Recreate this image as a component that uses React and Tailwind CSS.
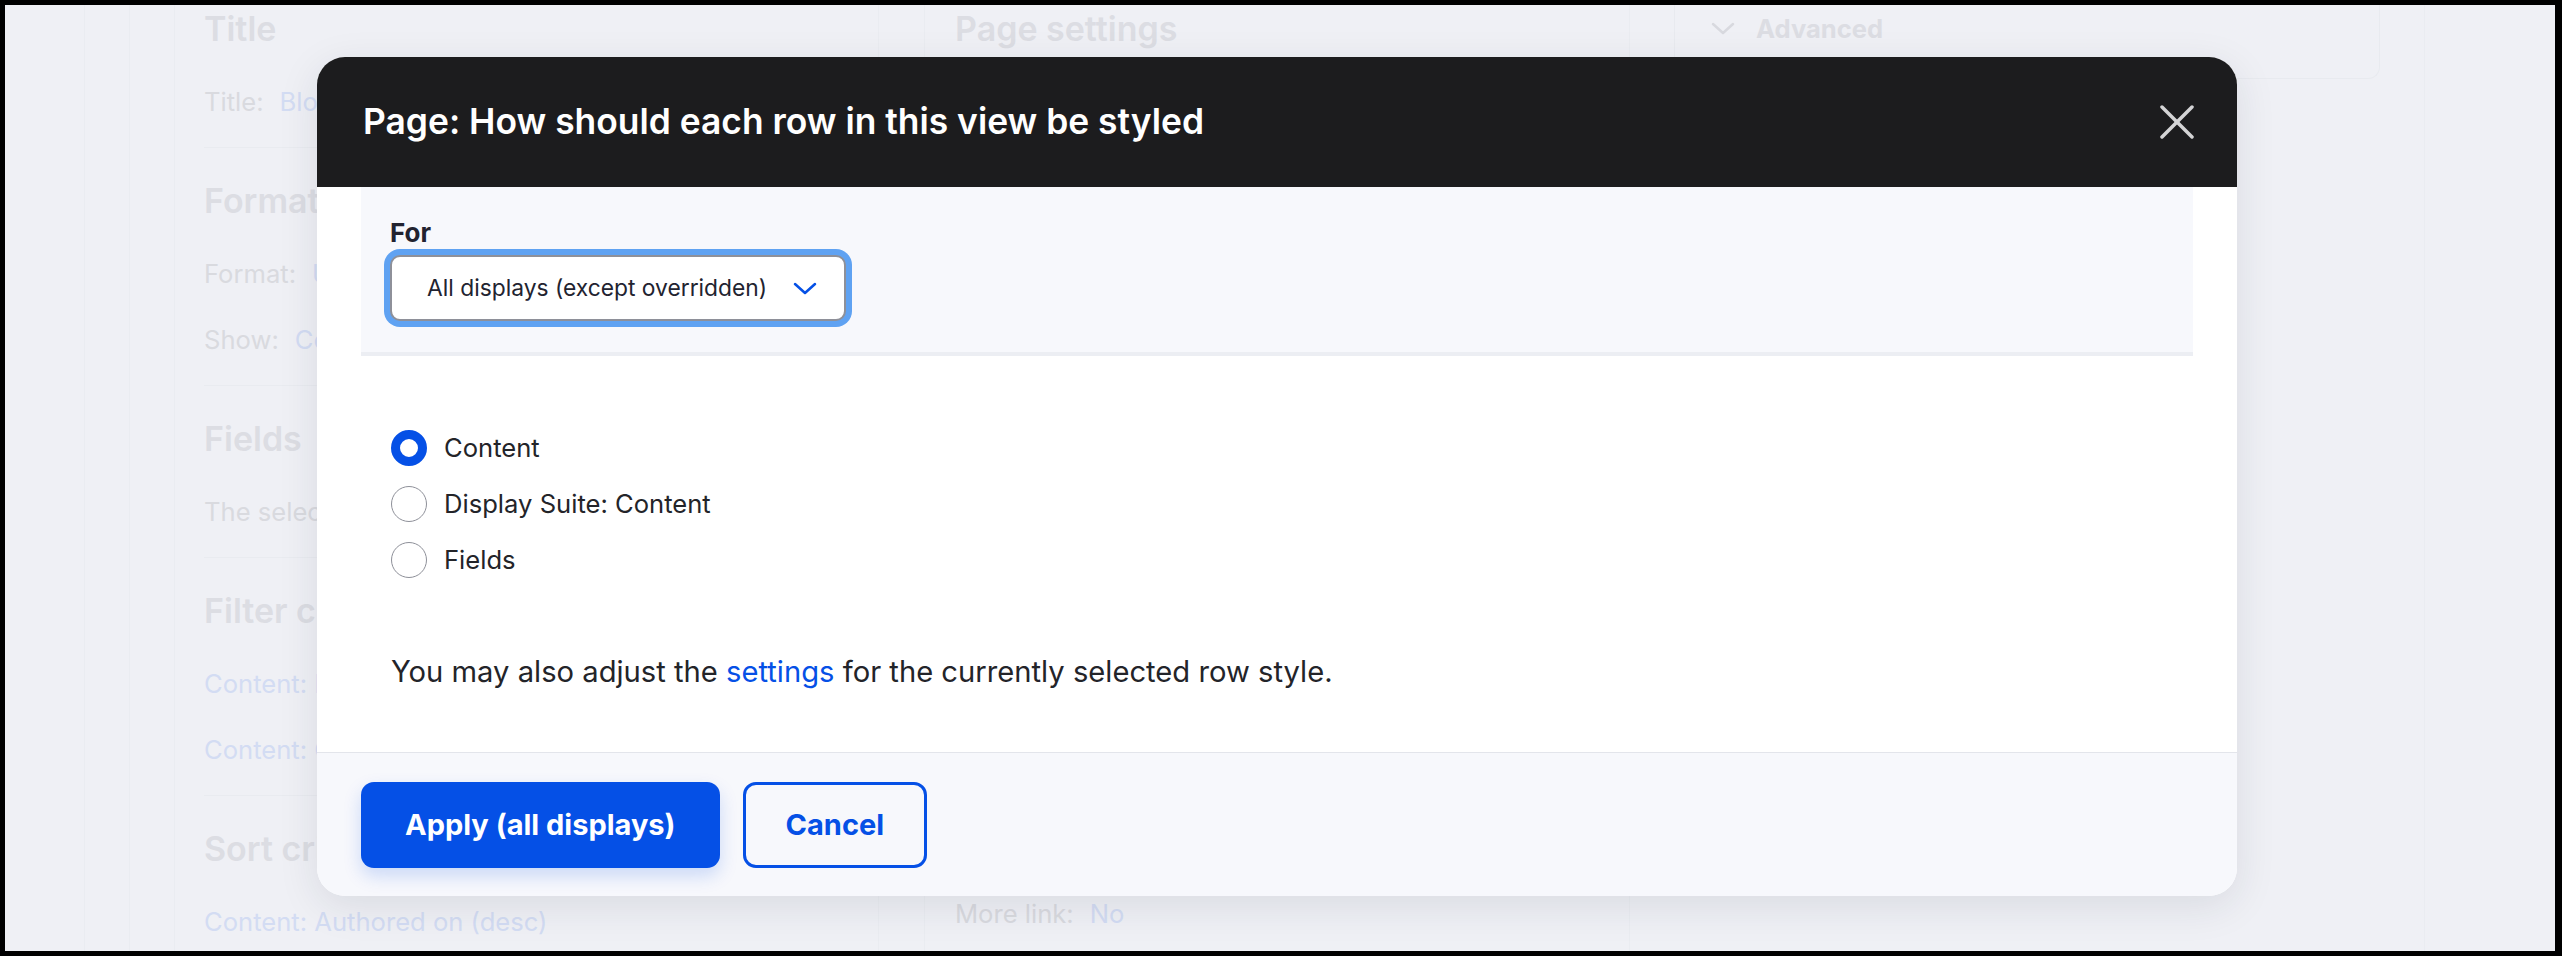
import React from "react";

const sections = [
  { title: "Title", first: true, lines: [[["Title:", "gray"], ["Blog", "link"]]] },
  {
    title: "Format",
    lines: [
      [["Format:", "gray"], ["Unformatted list", "link"]],
      [["Show:", "gray"], ["Content", "link"]],
    ],
  },
  { title: "Fields", lines: [[["The selected style or row format does not use fields.", "gray"]]] },
  {
    title: "Filter criteria",
    lines: [
      [["Content: Published (= Yes)", "link"]],
      [["Content: Content type (= Article)", "link"]],
    ],
  },
  { title: "Sort criteria", last: true, lines: [[["Content: Authored on (desc)", "link"]]] },
];

const BgSection = ({ title, lines, first, last }) => (
  <div
    className={`flex flex-col ${first ? "pt-[4px]" : "pt-[33px]"} ${last ? "" : "border-b border-[#e9ebf0]"} pb-[26px]`}
  >
    <h2 className="text-[34px] leading-[40px] font-semibold text-[#dcdde3] whitespace-nowrap">{title}</h2>
    <div className="flex flex-col gap-[28px] mt-[34px]">
      {lines.map((parts, i) => (
        <div key={i} className="text-[25.6px] leading-[38px] whitespace-nowrap flex gap-[16px]">
          {parts.map(([text, kind], j) => (
            <span key={j} className={kind === "link" ? "text-[#d3dcf3]" : "text-[#d9dadf]"}>
              {text}
            </span>
          ))}
        </div>
      ))}
    </div>
  </div>
);

const Radio = ({ label, checked }) => (
  <div className="h-[56px] flex items-center gap-[17px]">
    {checked ? (
      <span className="w-[36px] h-[36px] rounded-full border-[9px] border-[#0550e6] bg-white" />
    ) : (
      <span className="w-[36px] h-[36px] rounded-full border-[1.5px] border-[#8e9099] bg-white" />
    )}
    <span className="text-[25.6px] leading-[38px] text-[#232429]">{label}</span>
  </div>
);

export default function App() {
  return (
    <div className="w-[2562px] h-[956px] bg-black pt-[5px] pl-[5px] pr-[7px] pb-[5px] font-[family-name:Inter,sans-serif]">
      <div className="relative w-full h-full bg-[#eff0f5] overflow-hidden flex">
        {/* page behind the overlay */}
        <div className="w-[80px] border-r border-[#eaecf1]" />
        <div className="w-[45px] border-r border-[#eaecf1]" />
        <div className="w-[44px]" />

        <div className="w-[705px] border-x border-[#eaecf1] pl-[29px] overflow-hidden flex flex-col">
          {sections.map((s) => (
            <BgSection key={s.title} {...s} />
          ))}
        </div>

        <div className="w-[45px]" />

        <div className="w-[706px] border-x border-[#eaecf1] pl-[30px] pb-[18px] overflow-hidden flex flex-col">
          <h2 className="pt-[4px] text-[34px] leading-[40px] font-semibold text-[#dcdde3] whitespace-nowrap">
            Page settings
          </h2>
          <div className="mt-auto text-[25.6px] leading-[38px] whitespace-nowrap flex gap-[16px]">
            <span className="text-[#d9dadf]">More link:</span>
            <span className="text-[#d3dcf3]">No</span>
          </div>
        </div>

        <div className="w-[44px]" />

        <div className="w-[706px]">
          <div className="h-[74px] border-x border-b border-[#e8eaef] rounded-b-[12px] pl-[36px] pt-[8px] flex items-start gap-[21px]">
            <svg width="24" height="32" viewBox="0 0 24 32" fill="none">
              <polyline points="2,11 12,20 22,11" stroke="#d8d9df" strokeWidth="2.5" strokeLinecap="round" strokeLinejoin="round" />
            </svg>
            <span className="text-[25.6px] leading-[32px] font-bold text-[#dcdde3]">Advanced</span>
          </div>
        </div>

        <div className="w-[45px] border-r border-[#eaecf1]" />

        {/* dialog */}
        <div className="absolute left-[312px] top-[52px] w-[1920px] rounded-[28px] bg-white shadow-[0_10px_40px_rgba(30,35,60,0.10)] overflow-hidden flex flex-col">
          <div className="h-[130px] bg-[#1c1c1e] flex items-center justify-between pl-[46px] pr-[43px]">
            <h1 className="text-[35.4px] leading-[40px] font-semibold text-white">
              Page: How should each row in this view be styled
            </h1>
            <button className="w-[34px] h-[34px] flex items-center justify-center">
              <svg width="34" height="34" viewBox="0 0 34 34" fill="none">
                <line x1="2" y1="2" x2="32" y2="32" stroke="#d4d4d6" strokeWidth="3.5" strokeLinecap="round" />
                <line x1="32" y1="2" x2="2" y2="32" stroke="#d4d4d6" strokeWidth="3.5" strokeLinecap="round" />
              </svg>
            </button>
          </div>

          <div className="px-[44px] pb-[61px]">
            <div className="bg-[#f7f8fc] border-b-[4px] border-[#eceef3] pl-[29px] pt-[30px] pb-[31px]">
              <label className="block text-[26px] leading-[31px] font-bold text-[#222330]">For</label>
              <div className="mt-[7px] w-[456px] h-[66px] rounded-[10px] border-2 border-[#8e9099] bg-white shadow-[0_0_0_6px_#5fa2f2] flex items-center justify-between pl-[35px] pr-[27px]">
                <span className="text-[22.8px] text-[#222330] whitespace-nowrap">All displays (except overridden)</span>
                <svg width="24" height="13" viewBox="0 0 24 13" fill="none">
                  <polyline points="2,2 12,11 22,2" stroke="#0550e6" strokeWidth="2.5" strokeLinecap="round" strokeLinejoin="round" />
                </svg>
              </div>
            </div>

            <div className="mt-[64px] pl-[30px] flex flex-col">
              <Radio label="Content" checked />
              <Radio label="Display Suite: Content" />
              <Radio label="Fields" />
            </div>

            <p className="mt-[65px] pl-[30px] text-[29.2px] leading-[38px] text-[#232429]">
              You may also adjust the <span className="text-[#0550e6]">settings</span> for the currently selected row style.
            </p>
          </div>

          <div className="border-t border-[#e3e5eb] bg-[#f7f8fc] pt-[29px] pb-[28px] px-[44px] flex gap-[23px]">
            <button className="h-[86px] px-[44px] rounded-[13px] bg-[#0550e6] text-white text-[29px] font-bold shadow-[0_8px_18px_rgba(5,80,230,0.18)]">
              Apply (all displays)
            </button>
            <button className="h-[86px] px-[40px] rounded-[13px] border-[3px] border-[#0550e6] text-[#0550e6] text-[29px] font-bold">
              Cancel
            </button>
          </div>
        </div>
      </div>
    </div>
  );
}
